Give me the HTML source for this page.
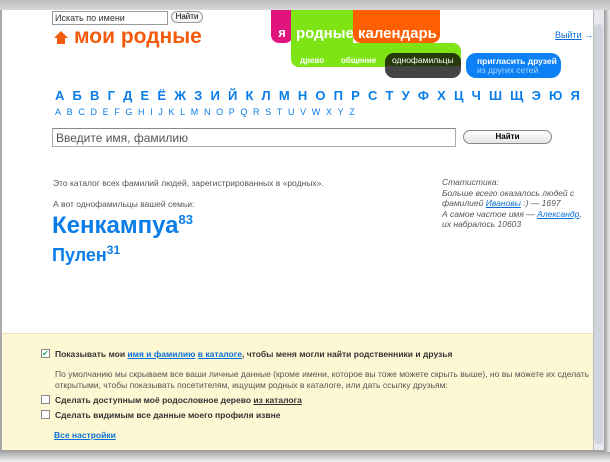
<!DOCTYPE html>
<html><head><meta charset="utf-8"><style>
*{margin:0;padding:0;box-sizing:border-box}
body{width:610px;height:462px;background:#fff;font-family:"Liberation Sans",sans-serif;position:relative;overflow:hidden}
.a{position:absolute;white-space:nowrap}
a{color:#0a6fd8}
</style></head><body>
<div class="a" style="left:0;top:0;width:610px;height:10px;background:linear-gradient(#bdbdbd,#d8d8d8)"></div>
<div class="a" style="left:0;top:450px;width:610px;height:12px;background:linear-gradient(#9a9a9a,#f4f4f4)"></div>
<div class="a" style="left:604px;top:10px;width:6px;height:442px;background:linear-gradient(90deg,#999,#eee)"></div>
<div class="a" style="left:0;top:10px;width:2px;height:440px;background:#aaa"></div>
<div class="a" style="left:593px;top:10px;width:11px;height:440px;background:#e8e8ee;border-left:1px solid #bbb"></div>
<div class="a" style="left:594px;top:24px;width:9px;height:420px;background:#d0d4dc;border-radius:4px"></div>
<div class="a" style="left:2px;top:333px;width:591px;height:117px;background:#fdf7d3;border-top:1px solid #eee2a8"></div>

<input class="a" style="left:52px;top:11px;width:116px;height:14px;border:1px solid #999;font-size:9px;padding-left:2px;color:#333;font-family:inherit" value="Искать по имени">
<div class="a" style="left:171px;top:11px;width:32px;height:12px;border:1px solid #999;border-radius:7px;font-size:8px;text-align:center;line-height:10px;background:#f6f6f6">Найти</div>
<svg class="a" style="left:54px;top:31px" width="14" height="14" viewBox="0 0 14 14"><path d="M7 0L14 7H11V13H3V7H0Z" fill="#f25a0c"/></svg>
<div class="a" style="left:74px;top:25px;font-size:21px;color:#f25a0c;font-weight:bold">мои родные</div>

<div class="a" style="left:271px;top:10px;width:22px;height:33px;background:#e0147c;border-radius:0 0 8px 8px;color:#fff;font-weight:bold;font-size:13px;text-align:center;padding-top:15px">я</div>
<div class="a" style="left:291px;top:10px;width:62px;height:57px;background:#7ee414;border-radius:0 0 0 8px"></div>
<div class="a" style="left:291px;top:43px;width:170px;height:24px;background:#7ee414;border-radius:0 8px 8px 8px"></div>
<div class="a" style="left:296px;top:25px;color:#fff;font-weight:bold;font-size:15px">родные</div>
<div class="a" style="left:353px;top:10px;width:87px;height:33px;background:#ff5f00;border-radius:0 0 8px 8px;color:#fff;font-weight:bold;font-size:15px;padding:15px 0 0 5px">календарь</div>
<div class="a" style="left:300px;top:56px;color:#fff;font-weight:bold;font-size:8px">древо</div>
<div class="a" style="left:341px;top:56px;color:#fff;font-weight:bold;font-size:8px">общение</div>
<div class="a" style="left:385px;top:53px;width:76px;height:25px;background:#444;border-radius:9px"></div>
<div class="a" style="left:385px;top:53px;width:76px;height:13px;background:#263a0a;border-radius:9px 9px 0 0"></div>
<div class="a" style="left:392px;top:55px;color:#fff;font-size:8.5px">однофамильцы</div>
<div class="a" style="left:466px;top:53px;width:95px;height:25px;background:#0c80f5;border-radius:10px;font-size:8.5px;font-weight:bold;color:#fff;padding:4px 0 0 11px;line-height:9px">пригласить друзей<br><span style="color:#a8d6ff;font-weight:normal">из других сетей</span></div>
<div class="a" style="left:555px;top:30px;font-size:9px;color:#0a6fd8"><u>Выйти</u> →</div>

<div class="a" style="left:55px;top:88px;width:525px;font-size:13px;font-weight:bold;color:#0a7de8;display:flex;justify-content:space-between">
<span>А</span><span>Б</span><span>В</span><span>Г</span><span>Д</span><span>Е</span><span>Ё</span><span>Ж</span><span>З</span><span>И</span><span>Й</span><span>К</span><span>Л</span><span>М</span><span>Н</span><span>О</span><span>П</span><span>Р</span><span>С</span><span>Т</span><span>У</span><span>Ф</span><span>Х</span><span>Ц</span><span>Ч</span><span>Ш</span><span>Щ</span><span>Э</span><span>Ю</span><span>Я</span></div>
<div class="a" style="left:55px;top:107px;width:300px;font-size:9px;color:#0a7de8;display:flex;justify-content:space-between">
<span>A</span><span>B</span><span>C</span><span>D</span><span>E</span><span>F</span><span>G</span><span>H</span><span>I</span><span>J</span><span>K</span><span>L</span><span>M</span><span>N</span><span>O</span><span>P</span><span>Q</span><span>R</span><span>S</span><span>T</span><span>U</span><span>V</span><span>W</span><span>X</span><span>Y</span><span>Z</span></div>
<div class="a" style="left:52px;top:128px;width:404px;height:19px;border:1px solid #aaa;border-top-color:#888;font-size:12px;color:#555;padding:2px 3px">Введите имя, фамилию</div>
<div class="a" style="left:463px;top:130px;width:89px;height:14px;border:1px solid #888;border-radius:8px;font-size:8px;font-weight:bold;text-align:center;line-height:12px;background:linear-gradient(#fff,#e4e4e4)">Найти</div>

<div class="a" style="left:53px;top:178px;font-size:8.5px;color:#555">Это каталог всех фамилий людей, зарегистрированных в «родных».</div>
<div class="a" style="left:53px;top:199px;font-size:8.5px;color:#555">А вот однофамильцы вашей семьи:</div>
<div class="a" style="left:52px;top:212px;font-size:24px;font-weight:bold;color:#0a7de8">Кенкампуа<sup style="font-size:13px">83</sup></div>
<div class="a" style="left:52px;top:243px;font-size:18px;font-weight:bold;color:#0a7de8">Пулен<sup style="font-size:12px">31</sup></div>
<div class="a" style="left:442px;top:177px;font-size:8.5px;font-style:italic;color:#555;line-height:10.5px">Статистика:<br>Больше всего оказалось людей с<br>фамилией <a href="#">Ивановы</a> :) — 1697<br>А самое частое имя — <a href="#">Александр</a>,<br>их набралось 10603</div>

<div class="a" style="left:41px;top:349px;width:9px;height:9px;border:1px solid #888;background:#fff;font-size:8px;line-height:7px;color:#2a6">✔</div>
<div class="a" style="left:55px;top:349px;font-size:8.5px;font-weight:bold;color:#333">Показывать мои <a href="#">имя и фамилию</a> <a href="#">в каталоге</a>, чтобы меня могли найти родственники и друзья</div>
<div class="a" style="left:55px;top:369px;width:535px;white-space:normal;font-size:8.5px;color:#555;line-height:11px">По умолчанию мы скрываем все ваши личные данные (кроме имени, которое вы тоже можете скрыть выше), но вы можете их сделать открытыми, чтобы показывать посетителям, ищущим родных в каталоге, или дать ссылку друзьям:</div>
<div class="a" style="left:41px;top:395px;width:9px;height:9px;border:1px solid #888;background:#fff"></div>
<div class="a" style="left:55px;top:395px;font-size:8.5px;font-weight:bold;color:#333">Сделать доступным моё родословное дерево <u>из каталога</u></div>
<div class="a" style="left:41px;top:410px;width:9px;height:9px;border:1px solid #888;background:#fff"></div>
<div class="a" style="left:55px;top:410px;font-size:8.5px;font-weight:bold;color:#333">Сделать видимым все данные моего профиля извне</div>
<div class="a" style="left:54px;top:430px;font-size:8.5px;font-weight:bold"><a href="#">Все настройки</a></div>
</body></html>
